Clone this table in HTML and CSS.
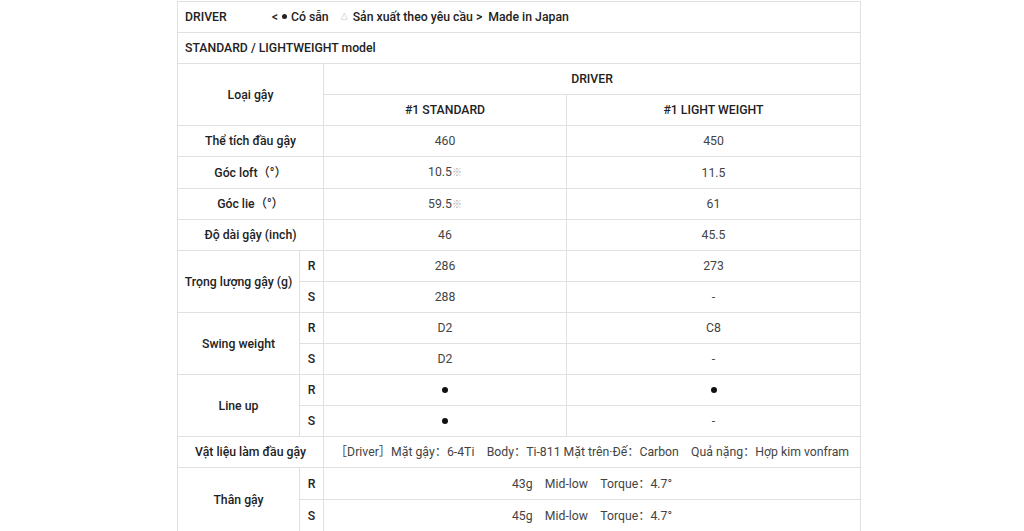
FILE: index.html
```html
<!DOCTYPE html>
<html lang="vi">
<head>
<meta charset="utf-8">
<title>DRIVER spec</title>
<link rel="stylesheet" href="styles.css">
</head>
<body>
<div class="wrap">
<table class="spec">
  <colgroup>
    <col class="c-label">
    <col class="c-flex">
    <col class="c-std">
    <col class="c-lw">
  </colgroup>
  <tbody>
    <tr class="cap">
      <td colspan="4"><span class="cap-title">DRIVER</span><span class="cap-legend">&lt;<span class="dot small"></span>Có sẵn<span class="tri">△</span>Sản xuất theo yêu cầu &gt;</span><span class="cap-made">Made in Japan</span></td>
    </tr>
    <tr class="cap">
      <td colspan="4">STANDARD / LIGHTWEIGHT model</td>
    </tr>
    <tr>
      <th rowspan="2" colspan="2">Loại gậy</th>
      <th colspan="2">DRIVER</th>
    </tr>
    <tr>
      <th>#1 STANDARD</th>
      <th>#1 LIGHT WEIGHT</th>
    </tr>
    <tr>
      <th colspan="2">Thể tích đầu gậy</th>
      <td>460</td>
      <td>450</td>
    </tr>
    <tr class="tall">
      <th colspan="2">Góc loft（°）</th>
      <td>10.5<span class="note">※</span></td>
      <td>11.5</td>
    </tr>
    <tr>
      <th colspan="2">Góc lie（°）</th>
      <td>59.5<span class="note">※</span></td>
      <td>61</td>
    </tr>
    <tr>
      <th colspan="2">Độ dài gậy (inch)</th>
      <td>46</td>
      <td>45.5</td>
    </tr>
    <tr>
      <th rowspan="2">Trọng lượng gậy (g)</th>
      <th class="flex">R</th>
      <td>286</td>
      <td>273</td>
    </tr>
    <tr>
      <th class="flex">S</th>
      <td>288</td>
      <td>-</td>
    </tr>
    <tr>
      <th rowspan="2">Swing weight</th>
      <th class="flex">R</th>
      <td>D2</td>
      <td>C8</td>
    </tr>
    <tr>
      <th class="flex">S</th>
      <td>D2</td>
      <td>-</td>
    </tr>
    <tr>
      <th rowspan="2">Line up</th>
      <th class="flex">R</th>
      <td><span class="dot" title="●"></span></td>
      <td><span class="dot" title="●"></span></td>
    </tr>
    <tr>
      <th class="flex">S</th>
      <td><span class="dot" title="●"></span></td>
      <td>-</td>
    </tr>
    <tr>
      <th colspan="2">Vật liệu làm đầu gậy</th>
      <td colspan="2">［Driver］Mặt gậy：6-4Ti　Body：Ti-811 Mặt trên·Đế：Carbon　Quả nặng：Hợp kim vonfram</td>
    </tr>
    <tr class="tall">
      <th rowspan="2">Thân gậy</th>
      <th class="flex">R</th>
      <td colspan="2">43g　Mid-low　Torque：4.7°</td>
    </tr>
    <tr class="tall">
      <th class="flex">S</th>
      <td colspan="2">45g　Mid-low　Torque：4.7°</td>
    </tr>
  </tbody>
</table>
</div>
</body>
</html>
```

FILE: styles.css
```css
html, body {
  margin: 0;
  padding: 0;
  background: #fff;
}

.wrap {
  padding: 1px 0 0 177px;
}

.spec {
  width: 683px;
  table-layout: fixed;
  border-collapse: collapse;
  font-family: Roboto, "Noto Sans CJK SC", "Liberation Sans", sans-serif;
  font-size: 12.25px;
  color: #444;
}

.c-label { width: 122px; }
.c-flex { width: 24px; }
.c-std { width: 243px; }
.c-lw { width: 294px; }

.spec th,
.spec td {
  border: 1px solid #e0e0e0;
  height: 30px;
  padding: 0 6px;
  line-height: 16px;
  text-align: center;
  vertical-align: middle;
  font-weight: 400;
  white-space: nowrap;
}

.spec tr.tall th,
.spec tr.tall td {
  height: 31px;
}

.spec th {
  color: #222;
  font-weight: 500;
}

.spec th.flex {
  padding: 0;
}

.spec tr.cap td {
  text-align: left;
  padding-left: 7px;
  color: #222;
  font-weight: 500;
}

.cap-legend {
  margin-left: 45px;
}

.tri {
  font-size: 7px;
  color: #888;
  vertical-align: 2px;
  margin: 0 5px 0 12px;
}

.cap-made {
  margin-left: 6px;
}

.note {
  font-size: 10px;
  color: #aaa;
}

.dot {
  display: inline-block;
  width: 6px;
  height: 6px;
  border-radius: 50%;
  background: #111;
  vertical-align: 1px;
}

.dot.small {
  width: 5px;
  height: 5px;
  background: #222;
  vertical-align: 2px;
  margin: 0 4px 0 4px;
}
```
